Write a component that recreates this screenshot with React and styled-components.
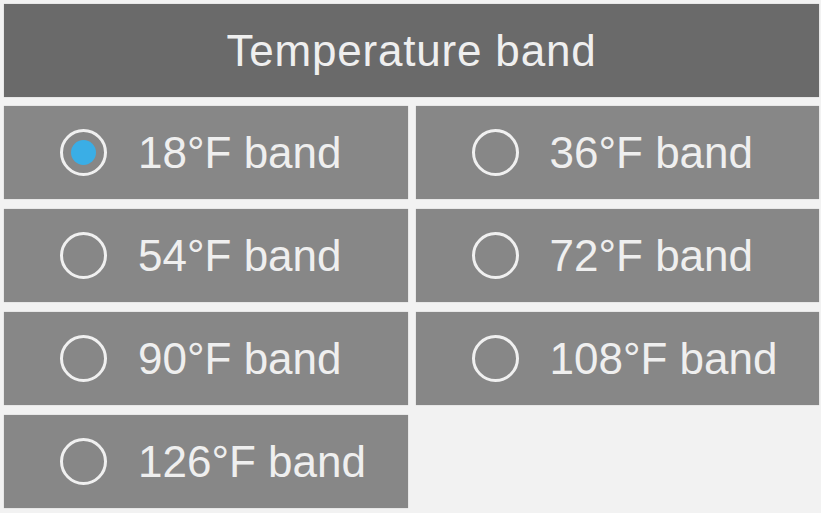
import React, { useState } from 'react';
import styled, { createGlobalStyle } from 'styled-components';

const GlobalStyle = createGlobalStyle`
  html, body {
    margin: 0;
    padding: 0;
    background: #f2f2f2;
  }
  body {
    font-family: "Liberation Sans", Arial, sans-serif;
  }
`;

const Panel = styled.div`
  width: 821px;
  height: 513px;
  box-sizing: border-box;
  padding: 4px 2px 0 4px;
  display: flex;
  flex-direction: column;
  gap: 9px;
`;

const Header = styled.div`
  height: 93px;
  background: #6a6a6a;
  color: #efefef;
  font-size: 44px;
  letter-spacing: 0.8px;
  display: flex;
  align-items: center;
  justify-content: center;
  box-shadow: 0 0 1px rgba(0, 0, 0, 0.25);
`;

const Options = styled.div`
  display: grid;
  grid-template-columns: 1fr 1fr;
  grid-auto-rows: 93px;
  column-gap: 8px;
  row-gap: 10px;
`;

const Option = styled.label`
  display: flex;
  align-items: center;
  gap: 31px;
  padding-left: 56px;
  background: #878787;
  color: #efefef;
  font-size: 44px;
  cursor: pointer;
  box-shadow: 0 0 1px rgba(0, 0, 0, 0.25);
`;

const Radio = styled.span`
  width: 47px;
  height: 47px;
  box-sizing: border-box;
  border-radius: 50%;
  border: 3.5px solid #f0f0f0;
  display: flex;
  align-items: center;
  justify-content: center;
  flex-shrink: 0;

  &::after {
    content: '';
    width: 25px;
    height: 25px;
    border-radius: 50%;
    background: ${(p) => (p.$checked ? '#3aaee6' : 'transparent')};
  }
`;

const bands = [18, 36, 54, 72, 90, 108, 126];

export default function App() {
  const [selected, setSelected] = useState(18);

  return (
    <>
      <GlobalStyle />
      <Panel>
        <Header>Temperature band</Header>
        <Options>
          {bands.map((b) => (
            <Option key={b} onClick={() => setSelected(b)}>
              <Radio $checked={selected === b} />
              {b}°F band
            </Option>
          ))}
        </Options>
      </Panel>
    </>
  );
}
